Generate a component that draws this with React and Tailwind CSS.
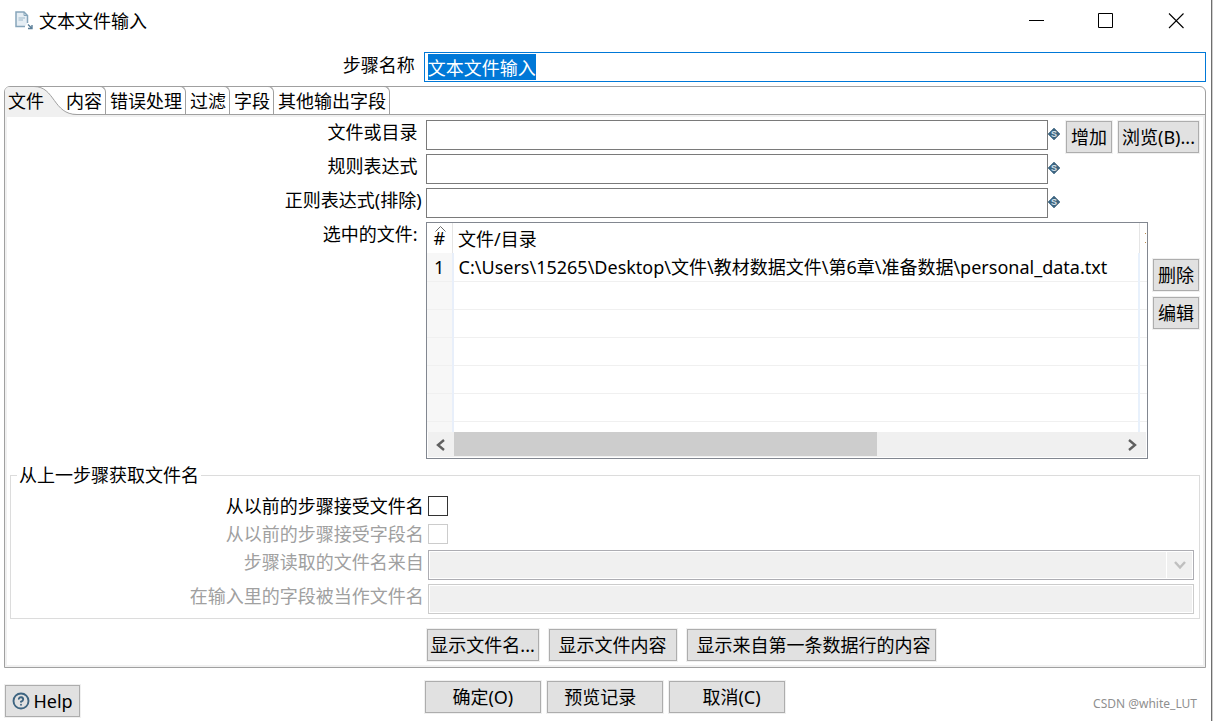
import { useEffect, useRef } from 'react';
import { CircleHelp } from 'lucide-react';

const tabs = ['内容', '错误处理', '过滤', '字段', '其他输出字段'];

const pathFields = [
  { id: 'file', label: '文件或目录', labelClass: 'pr-2' },
  { id: 'mask', label: '规则表达式', labelClass: 'pr-2' },
  { id: 'exclude', label: '正则表达式(排除)', labelClass: 'pr-1' },
];

const files = ['C:\\Users\\15265\\Desktop\\文件\\教材数据文件\\第6章\\准备数据\\personal_data.txt', '', '', '', '', ''];

const Button = ({ className = '', children }) => (
  <button
    type="button"
    className={`h-8 shrink-0 whitespace-nowrap border border-[#adadad] bg-[#e1e1e1] text-center shadow-[0_0_0_1px_#f0f0f0] ${className}`}
  >
    {children}
  </button>
);

const FileIcon = () => (
  <svg className="h-[19px] w-[18px]" viewBox="0 0 18 19" fill="none">
    <path d="M10 15.5H1V1H9L12.5 4.5V12" fill="#e6eef4" stroke="#86a5ba" strokeWidth="1.5" />
    <path d="M9 1V4.5H12.5" stroke="#86a5ba" />
    <path d="M3.5 7H10M3.5 9H8" stroke="#9db8c9" />
    <path d="M13 13.5L16.5 17M17 14V17.5H13" stroke="#5b7f99" strokeWidth="1.4" />
  </svg>
);

// marks a field that accepts ${variables}
const VariableIcon = () => (
  <svg className="mt-2 h-3 w-3 shrink-0" viewBox="0 0 12 12">
    <path d="M6 0L12 6L6 12L0 6Z" fill="#3d6480" stroke="#3d6480" strokeWidth="0.6" />
    <text x="6" y="9" textAnchor="middle" fontSize="9" fontWeight="bold" fontFamily="Liberation Sans, sans-serif" fill="#d5e0e8">
      S
    </text>
  </svg>
);

const TitleBar = () => (
  <header className="flex h-[41px] items-center pl-[15px] pr-[27px]">
    <FileIcon />
    <h1 className="ml-[6px]">文本文件输入</h1>
    <div className="ml-auto flex items-center gap-[54px]">
      <button type="button" aria-label="最小化">
        <svg className="h-4 w-4" viewBox="0 0 16 16"><path d="M1 7.5H16" stroke="#000" /></svg>
      </button>
      <button type="button" aria-label="最大化">
        <svg className="h-4 w-4" viewBox="0 0 16 16"><path d="M0.5 0.5H14.5V14.5H0.5Z" fill="none" stroke="#000" /></svg>
      </button>
      <button type="button" aria-label="关闭">
        <svg className="h-4 w-4" viewBox="0 0 16 16"><path d="M1 0.5L15.5 15M15.5 0.5L1 15" stroke="#000" strokeWidth="1.1" /></svg>
      </button>
    </div>
  </header>
);

const TabBar = () => (
  <div role="tablist" className="flex h-7 border-b border-[#a0a0a0]">
    <button type="button" role="tab" aria-selected="true" className="relative z-10 h-7 w-[57px] pl-[3px] text-left">
      <svg className="absolute left-0 top-0 h-7 w-[72px]" viewBox="0 0 72 28">
        <path d="M0 28V5Q0 0 5 0H31C50 0 48 27.5 72 27.5V28Z" fill="#f0f0f0" />
        <path d="M29 -0.5C50 -0.5 48 27.5 72 27.5" fill="none" stroke="#a0a0a0" />
      </svg>
      <span className="relative">文件</span>
    </button>
    {tabs.map((tab) => (
      <button
        key={tab}
        type="button"
        role="tab"
        aria-selected="false"
        className="-mt-px h-7 rounded-tr-[6px] border-r border-t border-[#a0a0a0] pl-1 pr-[3px]"
      >
        {tab}
      </button>
    ))}
  </div>
);

const FileTable = () => (
  <div className="min-w-0 border border-[#828790]">
    <table className="w-full table-fixed border-collapse">
      <colgroup>
        <col className="w-[26px]" />
        <col />
        <col className="w-2" />
      </colgroup>
      <thead>
        <tr className="h-[30px]">
          <th className="relative border-r border-[#e5e5e5] p-0 font-normal">
            <svg className="absolute left-2 top-[3px] h-[6px] w-[11px]" viewBox="0 0 11 6">
              <path d="M0.5 5.5L5.5 0.5L10.5 5.5" fill="none" stroke="#6a6a6a" />
            </svg>
            #
          </th>
          <th className="border-r border-[#e5e5e5] p-0 pl-[5px] pt-[2px] text-left font-normal">文件/目录</th>
          <th className="p-0">
            <svg className="ml-auto h-3 w-[2px]" viewBox="0 0 2 12">
              <path d="M0 1.5H1M0 10.5H1" stroke="#b98a4a" />
            </svg>
          </th>
        </tr>
      </thead>
      <tbody>
        {files.map((file, i) => (
          <tr key={i} className="h-7 border-b border-[#f0f0f0]">
            <td className="border-r-2 border-r-[#e8effa] bg-[#f7f7f7] p-0 text-center">{file && i + 1}</td>
            <td className="whitespace-nowrap border-r-2 border-r-[#e8f1fc] p-0 pl-[5px]">{file}</td>
            <td className="p-0" />
          </tr>
        ))}
        <tr className="h-[11px]">
          <td className="border-r-2 border-[#e8effa] bg-[#f7f7f7] p-0" />
          <td className="border-r-2 border-[#e8f1fc] p-0" />
          <td className="p-0" />
        </tr>
      </tbody>
    </table>
    <div className="mx-px mb-px flex h-[25px] bg-[#f0f0f0]">
      <button type="button" aria-label="向左滚动" className="flex w-[26px] items-center justify-center">
        <svg className="h-3 w-[9px]" viewBox="0 0 9 12">
          <path d="M8 1L2 6L8 11" fill="none" stroke="#606060" strokeWidth="2.4" />
        </svg>
      </button>
      <div className="flex-1">
        <div className="h-6 w-[63.7%] bg-[#cdcdcd]" />
      </div>
      <button type="button" aria-label="向右滚动" className="flex w-7 items-center justify-center">
        <svg className="h-3 w-[9px]" viewBox="0 0 9 12">
          <path d="M1 1L7 6L1 11" fill="none" stroke="#606060" strokeWidth="2.4" />
        </svg>
      </button>
    </div>
  </div>
);

const PreviousStepGroup = () => (
  <fieldset className="mx-[3px] mt-[3px] border border-[#dcdcdc] pb-1 pt-1">
    <legend className="ml-[6px] px-[2px] leading-[26px]">从上一步骤获取文件名</legend>
    <div className="grid grid-cols-[35%_1fr]">
      <label htmlFor="accept" className="pr-[3px] text-right leading-7">从以前的步骤接受文件名</label>
      <div className="flex items-center pl-px">
        <input id="accept" type="checkbox" className="h-5 w-5 appearance-none border border-[#333333] bg-white" />
      </div>
      <label htmlFor="passthru" className="pr-[3px] text-right leading-7 text-[#a0a0a0]">从以前的步骤接受字段名</label>
      <div className="flex items-center pl-px">
        <input id="passthru" type="checkbox" disabled className="h-5 w-5 appearance-none border border-[#cccccc] bg-white" />
      </div>
    </div>
    <div className="mt-[2px] grid grid-cols-[35%_1fr] gap-y-1">
      <label htmlFor="step" className="pr-[3px] text-right leading-6 text-[#a0a0a0]">步骤读取的文件名来自</label>
      <div className="relative pl-px pr-[5px]">
        <select
          id="step"
          disabled
          className="block h-[30px] w-full appearance-none border border-[#adadb3] bg-[#f0f0f0] opacity-100 shadow-[inset_0_0_0_1px_#ffffff]"
        />
        <div className="pointer-events-none absolute right-[7px] top-[2px] flex h-[26px] w-[26px] items-center justify-center border-l border-white">
          <svg className="h-[9px] w-3" viewBox="0 0 12 9">
            <path d="M1 1L6 6.5L11 1" fill="none" stroke="#bfbfbf" strokeWidth="2.4" />
          </svg>
        </div>
      </div>
      <label htmlFor="field" className="pr-[3px] text-right leading-6 text-[#a0a0a0]">在输入里的字段被当作文件名</label>
      <div className="pl-px pr-[5px]">
        <input
          id="field"
          type="text"
          disabled
          className="block h-[30px] w-full border border-[#cccccc] bg-[#f0f0f0] shadow-[inset_0_0_0_1px_#ffffff]"
        />
      </div>
    </div>
  </fieldset>
);

const App = () => {
  const nameRef = useRef(null);

  useEffect(() => {
    nameRef.current.focus();
    nameRef.current.select();
  }, []);

  return (
    <div className="min-h-screen bg-[#cfcfcf] pr-px font-['Noto_Sans','Noto_Sans_CJK_SC',sans-serif] text-[18px] leading-[26px] text-black">
      <div className="min-h-screen border-r border-[#6e6e6e] bg-white">
        <TitleBar />

        <div className="mt-[11px] grid grid-cols-[35%_1fr]">
          <label htmlFor="stepname" className="pr-[9px] text-right">步骤名称</label>
          <div className="pr-[5px]">
            <input
              id="stepname"
              ref={nameRef}
              type="text"
              defaultValue="文本文件输入"
              className="block h-[30px] w-full border border-[#0078d7] px-[3px] outline-none selection:bg-[#0078d7] selection:text-white"
            />
          </div>
        </div>

        <main className="ml-1 mr-[5px] mt-1 rounded-t-[6px] border border-[#a0a0a0]">
          <TabBar />
          <div className="border-2 border-[#f0f0f0] pb-1 pt-[3px]">
            <div className="grid grid-cols-[35%_1fr_auto] gap-y-1">
              {pathFields.map((field) => (
                <div key={field.id} className="contents">
                  <label htmlFor={field.id} className={`col-start-1 text-right leading-6 ${field.labelClass}`}>{field.label}</label>
                  <div className="flex">
                    <input id={field.id} type="text" className="h-[30px] min-w-0 flex-1 border border-[#7a7a7a] px-1 outline-none" />
                    <VariableIcon />
                  </div>
                </div>
              ))}
              <div className="col-start-3 row-span-3 row-start-1 flex gap-[6px] pl-[6px] pr-1 pt-px">
                <Button className="w-[46px]">增加</Button>
                <Button className="w-[81px]">浏览(B)...</Button>
              </div>
            </div>

            <div className="mt-1 grid grid-cols-[35%_1fr_auto]">
              <div className="pr-2 text-right leading-6">选中的文件:</div>
              <FileTable />
              <div className="flex flex-col gap-[6px] pl-[5px] pr-1 pt-[37px]">
                <Button className="w-[46px]">删除</Button>
                <Button className="w-[46px]">编辑</Button>
              </div>
            </div>

            <PreviousStepGroup />

            <div className="ml-px mt-[10px] flex gap-[10px] pl-[35%]">
              <Button className="w-[112px]">显示文件名...</Button>
              <Button className="w-32">显示文件内容</Button>
              <Button className="w-[249px]">{'\u00a0显示来自第一条数据行的内容'}</Button>
            </div>
          </div>
        </main>

        <footer className="mt-[13px] grid grid-cols-[35%_1fr_auto]">
          <div className="pl-[5px] pt-1">
            <Button className="flex w-[75px] items-center justify-center gap-[3px]">
              <CircleHelp className="h-[18px] w-[18px] text-[#3d6480]" strokeWidth={2.5} />
              Help
            </Button>
          </div>
          <div className="flex gap-[6px] pl-px">
            <Button className="w-[116px]">确定(O)</Button>
            <Button className="w-[116px]">{'预览记录\u00a0\u00a0'}</Button>
            <Button className="w-[116px]">{'\u00a0\u00a0取消(C)'}</Button>
          </div>
          <div className="self-end pr-[14px] text-[12px] leading-[26px] text-[#8f8f8f]">CSDN @white_LUT</div>
        </footer>
      </div>
    </div>
  );
};

export default App;
